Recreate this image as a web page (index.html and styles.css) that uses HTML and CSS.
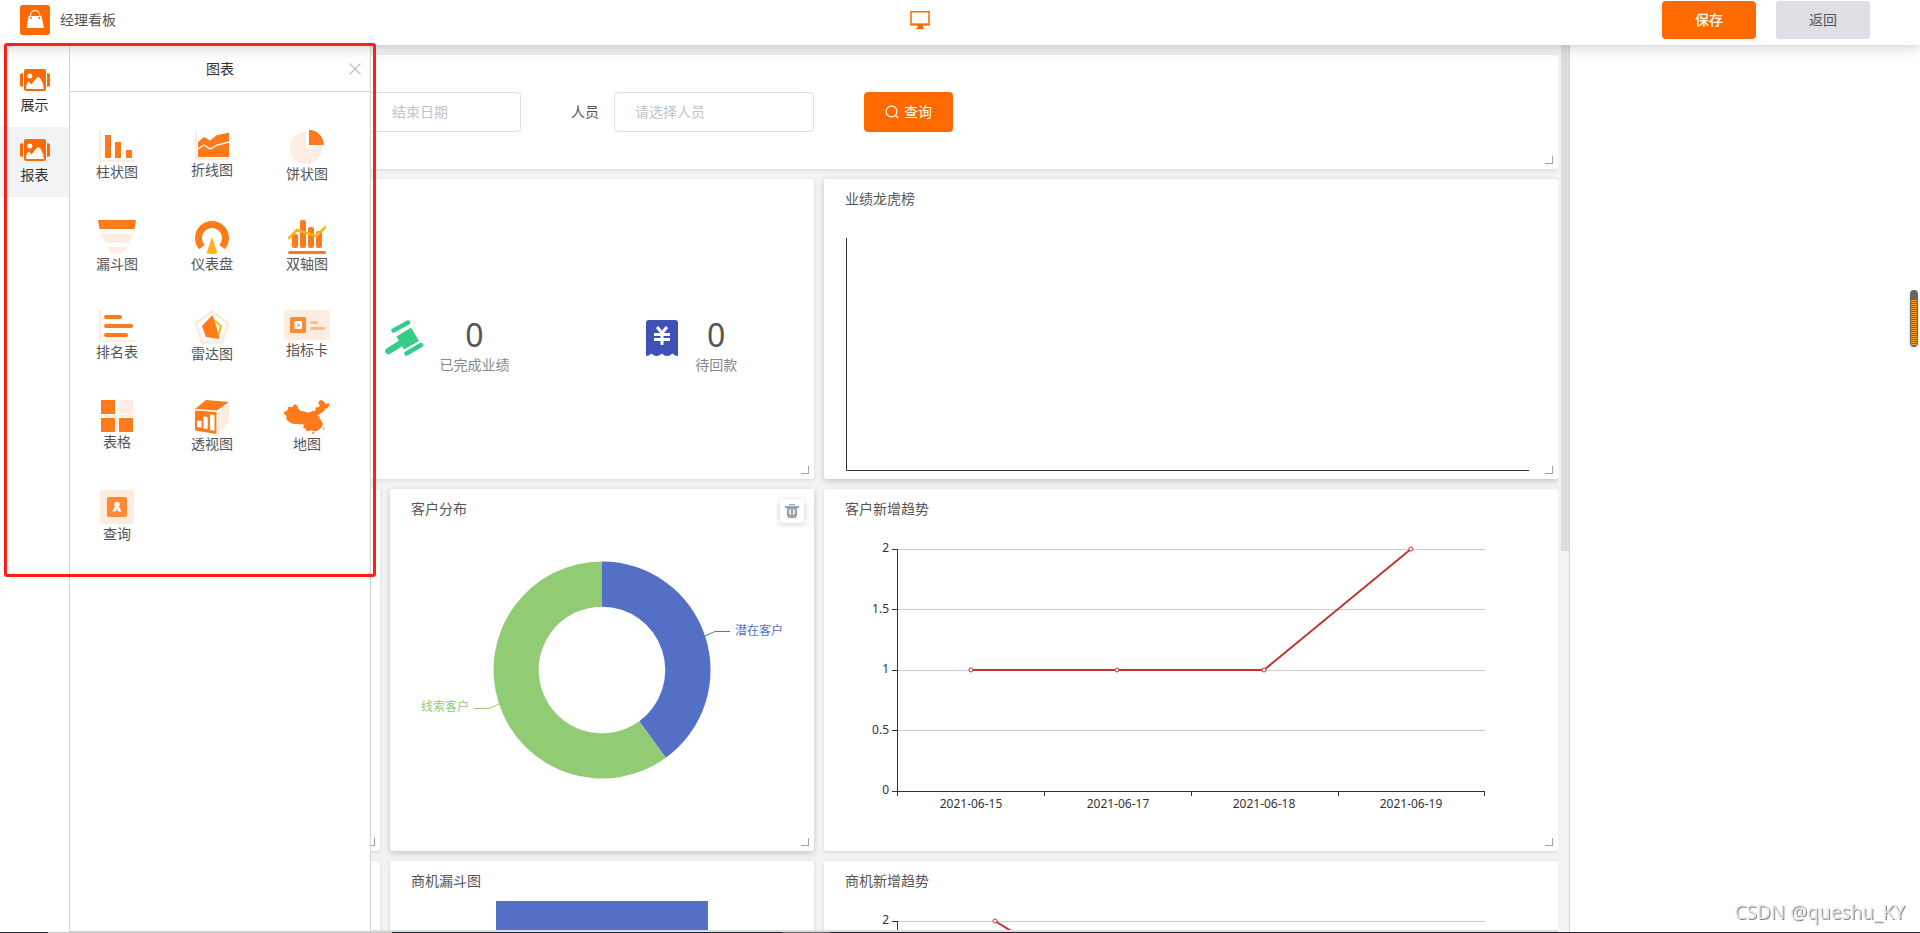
FILE: index.html
```html
<!DOCTYPE html>
<html lang="zh-CN">
<head>
<meta charset="utf-8">
<title>经理看板</title>
<link rel="stylesheet" href="styles.css">
</head>
<body>
<header class="topbar">
  <div class="brand">
    <svg class="brand-logo" width="30" height="30" viewBox="0 0 30 30"><rect width="30" height="30" rx="3" fill="#ff6a00"/><path d="M8.600 11H21.400L24 23H6.600Z" fill="#fff"/><path d="M10.500 13.500V10a4.600 4.400 0 0 1 9.200 0V13.500" fill="none" stroke="#ffe3cf" stroke-width="1.300"/><circle cx="11" cy="13" r=".9" fill="#ff6a00"/><circle cx="19.200" cy="13" r=".9" fill="#ff6a00"/></svg>
    <h1 class="brand-name">经理看板</h1>
  </div>
  <svg class="device" width="20" height="18" viewBox="0 0 20 18"><path d="M1 .7H19V13.500H1Z" fill="#fff" stroke="#ff6a00" stroke-width="1.500"/><path d="M0 12.500H20V14.500H0ZM7.500 14H13V17H14V18H6V17H7.500Z" fill="#ff6a00"/></svg>
  <div class="actions">
    <button class="btn btn-save" type="button">保存</button>
    <button class="btn btn-back" type="button">返回</button>
  </div>
</header>

<div class="workspace">
  <nav class="rail">
    <button class="rail-item" type="button">
      <svg width="30" height="22" viewBox="0 0 30 22"><path d="M0 5.500 2.500 4.500V17.500L0 16.500ZM30 5.500 27.500 4.500V17.500L30 16.500Z" fill="#ff6a00" stroke="#ff6a00"/><rect x="4" width="22" height="22" rx="2" fill="#ff6a00"/><circle cx="9.800" cy="7" r="2.500" fill="#fff"/><path d="M6.200 20V16.500Q7 13.800 8.500 12.500C10 13.500 10.600 15 11.300 15.200 13.500 14.500 14.500 9.500 18.500 8 22 10.500 23.500 16 23.800 20Z" fill="#fff"/></svg>
      <span>展示</span>
    </button>
    <button class="rail-item is-active" type="button">
      <svg width="30" height="22" viewBox="0 0 30 22"><path d="M0 5.500 2.500 4.500V17.500L0 16.500ZM30 5.500 27.500 4.500V17.500L30 16.500Z" fill="#ff6a00" stroke="#ff6a00"/><rect x="4" width="22" height="22" rx="2" fill="#ff6a00"/><circle cx="9.800" cy="7" r="2.500" fill="#fff"/><path d="M6.200 20V16.500Q7 13.800 8.500 12.500C10 13.500 10.600 15 11.300 15.200 13.500 14.500 14.500 9.500 18.500 8 22 10.500 23.500 16 23.800 20Z" fill="#fff"/></svg>
      <span>报表</span>
    </button>
  </nav>

  <div class="stage">
    <aside class="drawer">
      <div class="drawer-head">
        <h2 class="drawer-title">图表</h2>
        <button class="drawer-close" type="button" aria-label="关闭"><svg width="12" height="12" viewBox="0 0 12 12"><path d="M.5.5 11.500 11.500M11.500.5.5 11.500" stroke="#b8bec8" stroke-width="1.200"/></svg></button>
      </div>
      <div class="palette">
        <button class="tool" type="button"><svg width="36" height="32" viewBox="0 0 36 32"><path d="M0 0H2V30H36V32H0Z" fill="#ffece1"/><path d="M6 5H12V28H6ZM16 12H22V28H16ZM27 20H33V28H27Z" fill="#ff7a1a"/></svg><span>柱状图</span></button>
        <button class="tool" type="button"><svg width="34" height="30" viewBox="0 0 34 30"><path d="M0 0H2V28H34V30H0Z" fill="#ffece1"/><path d="M3 12 9 7 15 10.500 22 5 34 2.700V27H3Z" fill="#ff7a1a"/><path d="M3 19 9 15 15 19 22 15.200 34 12" fill="none" stroke="#fff" stroke-width="1.300"/></svg><span>折线图</span></button>
        <button class="tool" type="button"><svg width="34" height="34" viewBox="0 0 34 34"><path d="M16 2A16 16 0 1 0 32 18H16Z" fill="#ffece1"/><path d="M19 0A15 15 0 0 1 34 15H19Z" fill="#ff7a1a"/></svg><span>饼状图</span></button>
        <button class="tool" type="button"><svg width="38" height="34" viewBox="0 0 38 34"><path d="M0 0H38L36.500 9H1.500Z" fill="#ff7a1a"/><path d="M3 14H35L31 23H7ZM9 27H29Q25 34 19 34T9 27Z" fill="#ffece1"/></svg><span>漏斗图</span></button>
        <button class="tool" type="button"><svg width="34" height="34" viewBox="0 0 34 34"><path d="M7 27A13.500 13.500 0 1 1 27 27" fill="none" stroke="#ff7a1a" stroke-width="7"/><path d="M17 17 22.500 33Q17 35 11.500 33Z" fill="#ffb31a"/></svg><span>仪表盘</span></button>
        <button class="tool" type="button"><svg width="38" height="34" viewBox="0 0 38 34"><g fill="#ff7a1a"><rect x="4" y="14" width="6" height="14" rx="2"/><rect x="12" width="6" height="28" rx="2"/><rect x="20" y="7" width="6" height="21" rx="2"/><rect x="28" y="11" width="6" height="17" rx="2"/><rect y="31" width="38" height="3" rx="1.500"/></g><path d="M1 18 9 10 28 16 37 7.500" fill="none" stroke="#ffb31a" stroke-width="2.600" stroke-linecap="round"/></svg><span>双轴图</span></button>
        <button class="tool" type="button"><svg width="36" height="32" viewBox="0 0 36 32"><path d="M0 0H2V30H36V32H0Z" fill="#ffece1"/><path d="M7 7H21M7 16H32M7 25H27" stroke="#ff7a1a" stroke-width="4" stroke-linecap="round"/></svg><span>排名表</span></button>
        <button class="tool" type="button"><svg width="36" height="34" viewBox="0 0 36 34"><path d="M18 1.500 34 13 28 32.500H8L2 13Z" fill="none" stroke="#ffece1" stroke-width="3"/><path d="M20 10 27 16 24 27Z" fill="#fff" stroke="#ffb31a" stroke-width="2"/><path d="M18.500 5 8 16 12 27 25.500 29 21.500 16Z" fill="#ff7a1a"/></svg><span>雷达图</span></button>
        <button class="tool" type="button"><svg width="46" height="30" viewBox="0 0 46 30"><rect width="46" height="30" rx="2" fill="#ffece1"/><rect x="6" y="7" width="16" height="16" rx="1.500" fill="#ff8a34"/><rect x="10.500" y="11" width="7.500" height="8" rx="1" fill="#fff"/><rect x="13" y="13.500" width="3" height="3" fill="#ffb98a"/><path d="M27.500 12.500H32.500M27.500 18.500H39.500" stroke="#ffb98a" stroke-width="3" stroke-linecap="round"/></svg><span>指标卡</span></button>
        <button class="tool" type="button"><svg width="32" height="32" viewBox="0 0 32 32"><path d="M14 0H15V14H32V0H18V14H14ZM0 15H32V17H0ZM15 17H17V32H15Z" fill="#ffece1"/><path d="M0 0H14V14H0ZM0 18H14V32H0ZM18 18H32V32H18Z" fill="#ff7a1a"/></svg><span>表格</span></button>
        <button class="tool" type="button"><svg width="34" height="34" viewBox="0 0 34 34"><path d="M11 0 34 2 22 10.500 0 9Z" fill="#ff7a1a"/><path d="M23 12 34 4V22L23 34Z" fill="#ffece1"/><path d="M0 10.500 21.500 12V34L0 30.500Z" fill="#ff7a1a"/><path d="M2 20.500 6.500 20.900V27.500L2 27ZM8.500 16.500 12.700 16.900V29L8.500 28.400ZM15 14.500 19.500 15V30.700L15 30Z" fill="#fff"/></svg><span>透视图</span></button>
        <button class="tool" type="button"><svg width="46" height="34" viewBox="0 0 138 102"><path d="M0 36 9 32 12 27 11 22 17 20 25 22 27 17 34 12 41 19 42 24 49 32 62 35 74 38 84 34 94 32 95 27 93 23 101 22 109 17 103 12 104 6 108 0 117 2 122 7 125 13 135 9 136 14 131 24 124 26 121 33 112 38 107 43 101 45 102 49 108 50 106 55 111 60 113 66 117 71 114 80 108 87 99 93 93 94 87 94 85 91 79 91 73 93 68 94 65 86 57 83 60 75 53 71 47 74 42 71 32 73 20 69 12 63 7 58 8 51 4 44 0 42ZM86 96 92 97 88 102 83 100ZM120 81 122 84 119 90 116 87Z" fill="#ff7a1a"/></svg><span>地图</span></button>
        <button class="tool" type="button"><svg width="34" height="34" viewBox="0 0 34 34"><rect width="34" height="34" rx="2" fill="#ffece1"/><rect x="7" y="7" width="20" height="20" rx="2" fill="#ff8a34"/><circle cx="17" cy="14.500" r="2.700" fill="#fff"/><path d="M15 16.500H19L21.500 21.500H18L17 18 16 21.500H12.500Q13 18.500 15 16.500Z" fill="#fff"/></svg><span>查询</span></button>
      </div>
    </aside>

    <main class="board">
      <section class="card card-query">
        <form class="query">
          <input class="field field-date" type="text" placeholder="结束日期" aria-label="结束日期">
          <div class="field-group">
            <label for="person">人员</label>
            <input class="field field-person" id="person" type="text" placeholder="请选择人员">
          </div>
          <button class="btn-query" type="button"><svg width="14" height="14" viewBox="0 0 14 14"><circle cx="6.500" cy="6.500" r="5.400" fill="none" stroke="#fff" stroke-width="1.200"/><path d="M10.500 10.500 13 13" stroke="#fff" stroke-width="1.200"/></svg><span>查询</span></button>
        </form>
        <i class="grip"></i>
      </section>

      <section class="card card-metrics">
        <div class="metric metric-done">
          <svg width="40" height="38" viewBox="0 0 40 38"><g stroke="#34ce89" stroke-linecap="round"><path d="M9.500 11.500 24 3.500M22.500 34.500 37 26" stroke-width="4.500"/><path d="M4.500 32 18 23.500" stroke-width="6.500"/></g><path d="M12.500 17.500 27 8.500 35 22 20 30.500Z" fill="#34ce89"/></svg>
          <div class="metric-text"><strong class="metric-value">0</strong><span class="metric-label">已完成业绩</span></div>
        </div>
        <div class="metric metric-due">
          <svg width="34" height="38" viewBox="0 0 34 38"><path d="M0 4Q0 1 3 1H29Q32 1 32 4V37Q29 37 26.500 34.500 23.500 37 21 37T16 34.500Q13 37 10.500 37T5.500 34.500Q3 37 0 37Z" fill="#3f51b5"/><path d="M11 8 16 14 21 8M8 15.500H24M8 20.500H24M16 14V26" fill="none" stroke="#fff" stroke-width="3"/></svg>
          <div class="metric-text"><strong class="metric-value">0</strong><span class="metric-label">待回款</span></div>
        </div>
        <i class="grip"></i>
      </section>

      <section class="card card-rank">
        <h3 class="card-title">业绩龙虎榜</h3>
        <svg class="chart" viewBox="0 0 734 260"><path d="M22.500 19V251.500H705" fill="none" stroke="#333"/></svg>
        <i class="grip"></i>
      </section>

      <section class="card card-chart"><i class="grip"></i></section>

      <section class="card card-chart is-hover">
        <h3 class="card-title">客户分布</h3>
        <button class="trash" type="button" aria-label="删除"><svg width="14" height="14" viewBox="0 0 14 14"><path d="M4 0H10V1.200H4ZM0 2H14V4H12V12L10.500 14H3.500L2 12V4H0Z" fill="#9ba3ab"/><path d="M5.200 5.500V10.500M8.800 5.500V10.500" stroke="#fff" stroke-width="1.600"/></svg></button>
        <svg class="chart" viewBox="0 0 424 322">
          <path d="M212 32.500A108.500 108.500 0 0 1 275.800 228.800L249.200 192.200A63.300 63.300 0 0 0 212 77.700Z" fill="#5470c6"/>
          <path d="M275.800 228.800A108.500 108.500 0 1 1 212 32.500V77.700A63.300 63.300 0 1 0 249.200 192.200Z" fill="#91cc75"/>
          <path d="M315 107 325 102.500H340" fill="none" stroke="#5470c6"/>
          <path d="M109 175 99 179.500H83.500" fill="none" stroke="#91cc75"/>
          <text class="chart-label" x="345" y="106" fill="#5470c6">潜在客户</text>
          <text class="chart-label" x="31" y="182" fill="#91cc75">线索客户</text>
        </svg>
        <i class="grip"></i>
      </section>

      <section class="card card-chart">
        <h3 class="card-title">客户新增趋势</h3>
        <svg class="chart" viewBox="0 0 734 322">
          <path d="M74 20.500H661M74 80.500H661M74 141.500H661M74 201.500H661" stroke="#ccc"/>
          <path d="M73.500 20V267M68 20.500H73M68 80.500H73M68 141.500H73M68 201.500H73M68 262.500H661M220.500 262V267M367.500 262V267M514.500 262V267M660.500 262V267" fill="none" stroke="#333"/>
          <g class="chart-label" text-anchor="end" fill="#333"><text x="65" y="23">2</text><text x="65" y="84">1.5</text><text x="65" y="144">1</text><text x="65" y="205">0.5</text><text x="65" y="265">0</text></g>
          <g class="chart-label" text-anchor="middle" fill="#333"><text x="147" y="279">2021-06-15</text><text x="294" y="279">2021-06-17</text><text x="440" y="279">2021-06-18</text><text x="587" y="279">2021-06-19</text></g>
          <path d="M147 141H440L587 20" fill="none" stroke="#c23531" stroke-width="2"/>
          <g fill="#fff" stroke="#c23531"><circle cx="147" cy="141" r="2"/><circle cx="293" cy="141" r="2"/><circle cx="440" cy="141" r="2"/><circle cx="587" cy="20" r="2"/></g>
        </svg>
        <i class="grip"></i>
      </section>

      <section class="card card-chart"></section>

      <section class="card card-chart">
        <h3 class="card-title">商机漏斗图</h3>
        <svg class="chart" viewBox="0 0 424 322"><rect x="106" y="0" width="212" height="60" fill="#5470c6"/></svg>
      </section>

      <section class="card card-chart">
        <h3 class="card-title">商机新增趋势</h3>
        <svg class="chart" viewBox="0 0 734 322">
          <path d="M74 20.500H661" stroke="#ccc"/>
          <path d="M73.500 20V267M68 20.500H73" stroke="#333"/>
          <text class="chart-label" x="65" y="23" text-anchor="end" fill="#333">2</text>
          <path d="M171 20 367 141" stroke="#c23531" stroke-width="2"/>
          <circle cx="171" cy="20" r="2" fill="#fff" stroke="#c23531"/>
        </svg>
      </section>
    </main>
    <div class="board-scroll"></div>
  </div>

  <div class="settings"></div>
</div>
<div class="taskline"></div>

<div class="page-thumb"></div>
<div class="highlight"></div>
<div class="watermark">CSDN @queshu_KY</div>
</body>
</html>
```

FILE: styles.css
```css
* { box-sizing: border-box; }

body {
  margin: 0;
  height: 100vh;
  overflow: hidden;
  display: flex;
  flex-direction: column;
  background: #fff;
  color: #555;
  font: 14px/20px "Noto Sans", "Noto Sans CJK SC", sans-serif;
}

button, input { font: inherit; }
button { border: 0; background: none; padding: 0; cursor: pointer; color: inherit; }
svg { display: block; flex: none; }
h1, h2, h3 { margin: 0; font-size: 14px; font-weight: 400; }

/* Top bar */
.topbar {
  position: relative;
  z-index: 3;
  flex: none;
  display: grid;
  grid-template-columns: 1fr auto 1fr;
  align-items: center;
  height: 45px;
  padding: 0 50px 5px 20px;
  background: #fff;
  box-shadow: 0 2px 12px rgba(50, 60, 70, .25);
}
.brand { display: flex; align-items: center; gap: 10px; }
.device { margin-right: 50px; }
.actions { display: flex; justify-content: flex-end; gap: 20px; }
.btn { width: 94px; height: 38px; border-radius: 4px; }
.btn-save { background: #ff6a00; color: #fff; font-weight: 500; }
.btn-back { background: #dddfe4; }

/* Workspace */
.workspace { flex: 1; min-height: 0; display: flex; }
.rail { flex: none; width: 69px; padding-top: 12px; }
.rail-item {
  display: flex;
  flex-direction: column;
  align-items: center;
  gap: 4px;
  width: 100%;
  height: 70px;
  padding: 12px 0 0;
  color: #333;
}
.rail-item.is-active { background: #f1f3f5; }
.stage {
  position: relative;
  flex: 1;
  min-width: 0;
  overflow: hidden;
  border-right: 1px solid #d5d5d5;
  background: #f3f3f3;
}
.settings { flex: none; width: 350px; }

/* Chart drawer, floats over the board */
.drawer {
  position: absolute;
  z-index: 2;
  top: 0;
  bottom: 0;
  left: 0;
  width: 302px;
  border: 1px solid #d5d5d5;
  border-top: 0;
  background: #fff;
}
.drawer-head {
  display: grid;
  grid-template-columns: 40px 1fr 40px;
  align-items: center;
  height: 47px;
  padding-top: 2px;
  border-bottom: 1px solid #d5d5d5;
}
.drawer-title { grid-column: 2; text-align: center; color: #333; }
.drawer-close { display: flex; justify-content: center; padding-left: 10px; }
.palette {
  display: grid;
  grid-template-columns: repeat(3, 94px);
  column-gap: 1px;
  grid-auto-rows: 90px;
  padding-top: 38px;
}
.tool { display: flex; flex-direction: column; align-items: center; }

/* Board */
.board {
  display: grid;
  grid-template-columns: 300fr 424fr 734fr;
  gap: 10px;
  height: 100%;
  margin-right: 11px;
  padding: 10px 0 0 11px;
  overflow: hidden;
  border-bottom: 2px solid #ddd;
}
.board-scroll {
  position: absolute;
  top: 0;
  right: 0;
  width: 8px;
  height: 57%;
  background: #ddd;
}
.card {
  position: relative;
  display: flex;
  flex-direction: column;
  border-radius: 3px;
  background: #fff;
  box-shadow: 0 1px 4px rgba(0, 0, 0, .12);
}
.card-query { grid-column: 1 / -1; height: 114px; }
.card-metrics {
  grid-column: 1 / 3;
  display: grid;
  grid-template-columns: repeat(3, 1fr);
  align-items: center;
  height: 300px;
  padding-top: 40px;
}
.card-rank { height: 300px; }
.card-chart { height: 362px; }
.card-rank, .is-hover { box-shadow: 0 2px 6px rgba(0, 0, 0, .2); }
.card-title { padding: 0 21px; line-height: 40px; }
.chart { width: 100%; flex: 1; min-height: 0; }
.chart-label { font-size: 12px; }
.grip {
  position: absolute;
  right: 5px;
  bottom: 5px;
  width: 8px;
  height: 8px;
  border: solid #9ba3ab;
  border-width: 0 1px 1px 0;
}
.trash {
  position: absolute;
  top: 10px;
  right: 10px;
  display: flex;
  align-items: center;
  justify-content: center;
  width: 24px;
  height: 24px;
  border-radius: 3px;
  background: #fff;
  box-shadow: 0 1px 6px rgba(0, 0, 0, .2);
}

/* Query form */
.query { display: flex; align-items: center; gap: 50px; height: 100%; padding-left: 281px; }
.field-group { display: flex; align-items: center; gap: 15px; }
.field {
  height: 40px;
  border: 1px solid #dcdfe6;
  border-radius: 4px;
  background: #fff;
  padding: 0 20px 2px;
  outline: 0;
}
.field::placeholder { color: #c0c4cc; opacity: 1; }
.field-date { width: 160px; padding-left: 30px; }
.field-person { width: 200px; }
.btn-query {
  display: flex;
  align-items: center;
  justify-content: center;
  gap: 5px;
  width: 89px;
  height: 40px;
  border-radius: 4px;
  background: #ff6a00;
  color: #fff;
}

/* Metrics */
.metric { display: flex; justify-content: center; gap: 15px; }
.metric-done { grid-column: 2; }
.metric-due { grid-column: 3; }
.metric-text { display: flex; flex-direction: column; align-items: center; }
.metric-value { font-size: 32px; font-weight: 400; line-height: 32px; }
.metric-label { color: #888; line-height: 28px; }

/* Window edge and overlays */
.taskline {
  flex: none;
  height: 1px;
  background: linear-gradient(90deg, #1b2a38 48px, #c4c4c4 48px 392px, #1b2a38 392px 782px, #5a6670 782px 830px, #1b2540 830px);
}
.page-thumb {
  position: fixed;
  top: 290px;
  right: 2px;
  width: 8px;
  height: 57px;
  border: solid #666;
  border-width: 10px 1px 1px;
  border-radius: 4px;
  background: repeating-linear-gradient(#ffa01e 0 1px, #666 1px 2px);
  box-shadow: 0 2px 4px rgba(0, 0, 0, .15);
}
.highlight {
  position: fixed;
  z-index: 4;
  top: 43px;
  left: 4px;
  width: 372px;
  height: 534px;
  border: 3px solid #ff1f10;
  border-radius: 3px;
  pointer-events: none;
}
.watermark {
  position: fixed;
  right: 15px;
  bottom: 7px;
  color: #e4e4e4;
  font-size: 19px;
  line-height: 28px;
  text-shadow: 1px 1px 0 #888;
}
```
